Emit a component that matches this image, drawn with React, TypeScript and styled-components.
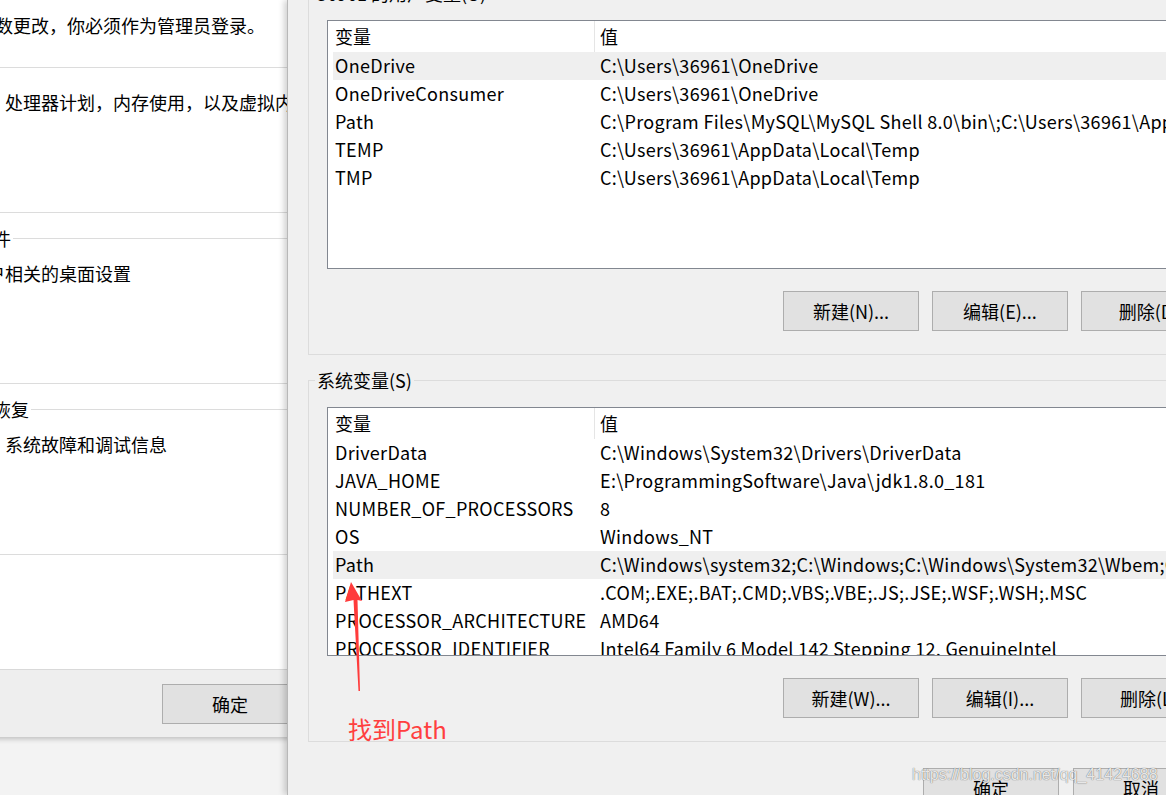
import React from "react";
import styled, { createGlobalStyle } from "styled-components";

const FONT = `"Noto Sans CJK SC", "Noto Sans", sans-serif`;

const GlobalStyle = createGlobalStyle`
  html, body { margin: 0; padding: 0; }
  body {
    background: #f3f3f3;
    font-family: ${FONT};
    overflow: hidden;
  }
  #root { width: 1166px; height: 795px; overflow: hidden; }
`;

const Screen = styled.div`
  position: relative;
  width: 1166px;
  height: 795px;
  overflow: hidden;
  display: grid;
  grid-template-columns: 287px 969px;
  background: #f3f3f3;
  font-family: ${FONT};
  font-size: 18px;
  color: #000;
`;

/* ---------- left: System Properties window (partly hidden) ---------- */

const LeftPane = styled.div`
  overflow: hidden;
  height: 795px;
`;

const LeftWindow = styled.div`
  width: 712px;
  margin-left: -100px;
  height: 737px;
  background: #fff;
  display: flex;
  flex-direction: column;
  box-shadow: 0 2px 5px rgba(0, 0, 0, 0.22);
`;

const WindowBody = styled.div`
  flex: 1;
  display: flex;
  flex-direction: column;
`;

const Note = styled.div`
  height: 67px;
  box-sizing: border-box;
  padding: 13px 0 0 5px;
  line-height: 24px;
  white-space: nowrap;
`;

const SettingGroup = styled.fieldset<{ $h: number; $top: number; $pad: number }>`
  margin: ${(p) => p.$top}px 0 0 0;
  border: 1px solid #dcdcdc;
  padding: ${(p) => p.$pad}px 0 0 0;
  height: ${(p) => p.$h}px;
  box-sizing: border-box;
  min-width: 0;
`;

const GroupLegend = styled.legend`
  padding: 0 2px;
  line-height: 24px;
  font-size: 18px;
`;

const GroupText = styled.div`
  margin-left: 14px;
  line-height: 24px;
  white-space: nowrap;
`;

const WindowFooter = styled.div`
  height: 68px;
  box-sizing: border-box;
  border-top: 1px solid #d9d9d9;
  background: #eeeeee;
  display: flex;
  justify-content: flex-end;
  gap: 13px;
  padding: 14px 16px 0 0;
`;

const DlgButton = styled.button`
  width: 136px;
  height: 40px;
  flex: none;
  box-sizing: border-box;
  background: #e1e1e1;
  border: 1px solid #adadad;
  border-radius: 0;
  font-family: ${FONT};
  font-size: 18px;
  color: #000;
  padding: 0 0 1px 0;
  line-height: 24px;
`;

/* ---------- right: Environment Variables dialog ---------- */

const RightDialog = styled.div`
  position: relative;
  z-index: 1;
  width: 969px;
  height: 795px;
  box-sizing: border-box;
  background: #f0f0f0;
  border-left: 1px solid #b8b8b8;
  box-shadow: -3px 0 6px rgba(0, 0, 0, 0.18);
  padding: 0 20px;
  display: flex;
  flex-direction: column;
`;

const VarGroup = styled.fieldset<{ $top: number }>`
  margin: ${(p) => p.$top}px 0 0 0;
  border: 1px solid #dcdcdc;
  padding: 15px 18px 23px 6px;
  min-width: 0;
`;

const VarLegend = styled.legend`
  padding: 0 2px;
  line-height: 24px;
  font-size: 18px;
`;

const GroupBody = styled.div`
  padding-left: 12px;
  display: flex;
  flex-direction: column;
  gap: 22px;
`;

const ListBox = styled.div`
  height: 249px;
  box-sizing: border-box;
  border: 1px solid #828790;
  background: #fff;
  overflow: hidden;
`;

const ListHeader = styled.div`
  display: grid;
  grid-template-columns: 266px minmax(0, 1fr);
  height: 31px;
`;

const HeaderCell = styled.div<{ $divider?: boolean }>`
  display: flex;
  align-items: center;
  padding-left: ${(p) => (p.$divider ? 5 : 7)}px;
  padding-bottom: 2px;
  box-sizing: border-box;
  border-left: ${(p) => (p.$divider ? "1px solid #e5e5e5" : "none")};
  white-space: nowrap;
`;

const ListRow = styled.div<{ $selected?: boolean }>`
  display: grid;
  grid-template-columns: 261px minmax(0, 1fr);
  margin-left: 5px;
  height: 28px;
  align-items: center;
  background: ${(p) => (p.$selected ? "#efefef" : "transparent")};
`;

const Cell = styled.div<{ $value?: boolean }>`
  padding-left: ${(p) => (p.$value ? 6 : 2)}px;
  padding-bottom: 2px;
  white-space: nowrap;
  overflow: hidden;
  line-height: 24px;
  letter-spacing: 0.3px;
`;

const ButtonRow = styled.div`
  display: flex;
  justify-content: flex-end;
  gap: 13px;
`;

const DialogFooter = styled.div`
  margin-top: 26px;
  display: flex;
  justify-content: flex-end;
  gap: 14px;
  padding-right: 27px;
`;

/* ---------- overlays ---------- */

const ArrowSvg = styled.svg`
  position: absolute;
  left: 340px;
  top: 576px;
  z-index: 3;
`;

const Annotation = styled.div`
  position: absolute;
  left: 348px;
  top: 715px;
  z-index: 3;
  font-size: 24px;
  line-height: 28px;
  color: #ff3f3f;
  white-space: nowrap;
`;

const Watermark = styled.div`
  position: absolute;
  left: 912px;
  top: 765px;
  z-index: 3;
  font-family: "Liberation Sans", Arial, sans-serif;
  font-size: 16px;
  line-height: 20px;
  color: rgba(255, 255, 255, 0.85);
  text-shadow: 0 0 1px rgba(0, 0, 0, 0.45), 0 0 1px rgba(0, 0, 0, 0.3);
  white-space: nowrap;
`;

type Row = { name: string; value: string; selected?: boolean };

const userVars: Row[] = [
  { name: "OneDrive", value: "C:\\Users\\36961\\OneDrive", selected: true },
  { name: "OneDriveConsumer", value: "C:\\Users\\36961\\OneDrive" },
  {
    name: "Path",
    value:
      "C:\\Program Files\\MySQL\\MySQL Shell 8.0\\bin\\;C:\\Users\\36961\\AppData\\Local\\Microsoft\\WindowsApps;",
  },
  { name: "TEMP", value: "C:\\Users\\36961\\AppData\\Local\\Temp" },
  { name: "TMP", value: "C:\\Users\\36961\\AppData\\Local\\Temp" },
];

const sysVars: Row[] = [
  { name: "DriverData", value: "C:\\Windows\\System32\\Drivers\\DriverData" },
  { name: "JAVA_HOME", value: "E:\\ProgrammingSoftware\\Java\\jdk1.8.0_181" },
  { name: "NUMBER_OF_PROCESSORS", value: "8" },
  { name: "OS", value: "Windows_NT" },
  {
    name: "Path",
    value:
      "C:\\Windows\\system32;C:\\Windows;C:\\Windows\\System32\\Wbem;C:\\Windows\\System32\\WindowsPowerShell\\v1.0\\;",
    selected: true,
  },
  { name: "PATHEXT", value: ".COM;.EXE;.BAT;.CMD;.VBS;.VBE;.JS;.JSE;.WSF;.WSH;.MSC" },
  { name: "PROCESSOR_ARCHITECTURE", value: "AMD64" },
  { name: "PROCESSOR_IDENTIFIER", value: "Intel64 Family 6 Model 142 Stepping 12, GenuineIntel" },
  { name: "PROCESSOR_LEVEL", value: "6" },
];

function VarList({ rows }: { rows: Row[] }) {
  return (
    <ListBox>
      <ListHeader>
        <HeaderCell>变量</HeaderCell>
        <HeaderCell $divider>值</HeaderCell>
      </ListHeader>
      {rows.map((r) => (
        <ListRow key={r.name} $selected={r.selected}>
          <Cell>{r.name}</Cell>
          <Cell $value>{r.value}</Cell>
        </ListRow>
      ))}
    </ListBox>
  );
}

export default function App() {
  return (
    <>
      <GlobalStyle />
      <Screen>
        <LeftPane>
          <LeftWindow>
            <WindowBody>
              <Note>要进行大多数更改，你必须作为管理员登录。</Note>
              <SettingGroup $top={0} $h={146} $pad={22}>
                <GroupText>视觉效果，处理器计划，内存使用，以及虚拟内存</GroupText>
              </SettingGroup>
              <SettingGroup $top={13} $h={158} $pad={11}>
                <GroupLegend>用户配置文件</GroupLegend>
                <GroupText>与登录帐户相关的桌面设置</GroupText>
              </SettingGroup>
              <SettingGroup $top={13} $h={158} $pad={11}>
                <GroupLegend>启动和故障恢复</GroupLegend>
                <GroupText>系统启动、系统故障和调试信息</GroupText>
              </SettingGroup>
            </WindowBody>
            <WindowFooter>
              <DlgButton>确定</DlgButton>
              <DlgButton>取消</DlgButton>
              <DlgButton>应用(A)</DlgButton>
            </WindowFooter>
          </LeftWindow>
        </LeftPane>

        <RightDialog>
          <VarGroup $top={-19}>
            <VarLegend>36961 的用户变量(U)</VarLegend>
            <GroupBody>
              <VarList rows={userVars} />
              <ButtonRow>
                <DlgButton>新建(N)...</DlgButton>
                <DlgButton>编辑(E)...</DlgButton>
                <DlgButton>删除(D)</DlgButton>
              </ButtonRow>
            </GroupBody>
          </VarGroup>
          <VarGroup $top={13}>
            <VarLegend>系统变量(S)</VarLegend>
            <GroupBody>
              <VarList rows={sysVars} />
              <ButtonRow>
                <DlgButton>新建(W)...</DlgButton>
                <DlgButton>编辑(I)...</DlgButton>
                <DlgButton>删除(L)</DlgButton>
              </ButtonRow>
            </GroupBody>
          </VarGroup>
          <DialogFooter>
            <DlgButton>确定</DlgButton>
            <DlgButton>取消</DlgButton>
          </DialogFooter>
        </RightDialog>

        <ArrowSvg width="30" height="120" viewBox="0 0 30 120">
          <polygon
            points="11,6 22,25 17.5,24 20,115 18.5,115 13.5,24 5,26"
            fill="#ff3b3b"
          />
        </ArrowSvg>
        <Annotation>找到Path</Annotation>
        <Watermark>https://blog.csdn.net/qq_41424688</Watermark>
      </Screen>
    </>
  );
}
